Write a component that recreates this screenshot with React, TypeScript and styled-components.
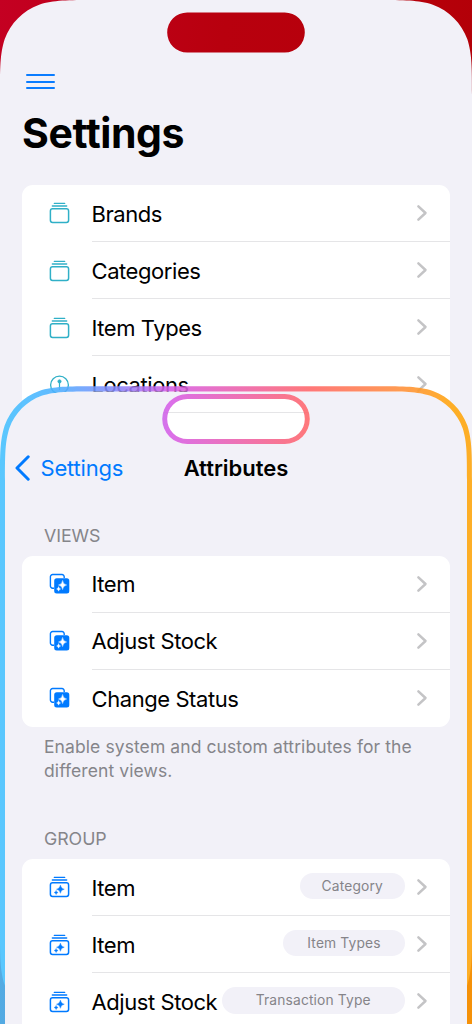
import React from "react";
import styled, { createGlobalStyle } from "styled-components";

const GlobalStyle = createGlobalStyle`
  * { box-sizing: border-box; }
  body { margin: 0; background: #b5000c; }
`;

const WIDTH = 472;
const HEIGHT = 1024;
const FRONT_TOP = 386;
const FRONT_HEIGHT = 1000;

/* Rounded rectangle with continuous-curvature corners. */
const squircle = (x: number, y: number, w: number, h: number, r: number) => {
  const a = 1.5287 * r;
  const b = 1.0885 * r;
  const c = 0.8684 * r;
  const d = 0.6315 * r;
  const e = 0.0749 * r;
  const f = 0.3728 * r;
  const g = 0.1691 * r;
  const R = x + w;
  const B = y + h;
  return [
    `M${x + a} ${y}`,
    `L${R - a} ${y}`,
    `C${R - b} ${y} ${R - c} ${y} ${R - d} ${y + e}`,
    `C${R - f} ${y + g} ${R - g} ${y + f} ${R - e} ${y + d}`,
    `C${R} ${y + c} ${R} ${y + b} ${R} ${y + a}`,
    `L${R} ${B - a}`,
    `C${R} ${B - b} ${R} ${B - c} ${R - e} ${B - d}`,
    `C${R - g} ${B - f} ${R - f} ${B - g} ${R - d} ${B - e}`,
    `C${R - c} ${B} ${R - b} ${B} ${R - a} ${B}`,
    `L${x + a} ${B}`,
    `C${x + b} ${B} ${x + c} ${B} ${x + d} ${B - e}`,
    `C${x + f} ${B - g} ${x + g} ${B - f} ${x + e} ${B - d}`,
    `C${x} ${B - c} ${x} ${B - b} ${x} ${B - a}`,
    `L${x} ${y + a}`,
    `C${x} ${y + b} ${x} ${y + c} ${x + e} ${y + d}`,
    `C${x + g} ${y + f} ${x + f} ${y + g} ${x + d} ${y + e}`,
    `C${x + c} ${y} ${x + b} ${y} ${x + a} ${y}Z`,
  ].join(" ");
};

const pill = (x: number, y: number, w: number, h: number) => {
  const r = h / 2;
  return `M${x + r} ${y} H${x + w - r} A${r} ${r} 0 0 1 ${x + w - r} ${y + h} H${x + r} A${r} ${r} 0 0 1 ${x + r} ${y}Z`;
};

const backClip = `${squircle(0, 0, WIDTH, HEIGHT, 62)} ${pill(167.2, 12.5, 137.6, 40)}`;
const innerScreen = squircle(5, 5.5, WIDTH - 10, FRONT_HEIGHT, 58);
const frontClip = `${innerScreen} ${pill(162.2, 8, 147.6, 50)}`;
const frameClip = `${squircle(0, 0.3, WIDTH, FRONT_HEIGHT + 10, 62)} ${innerScreen} ${pill(162.2, 8, 147.6, 50)} ${pill(167.2, 13, 137.6, 40)}`;

const Stage = styled.main`
  position: relative;
  width: 472px;
  height: 1024px;
  overflow: hidden;
  background: linear-gradient(100deg, #c40022 0%, #b8000e 35%, #b6000a 65%, #a90002 100%);
  font-family: Inter, "Liberation Sans", sans-serif;
  color: #000;
`;

const BackScreen = styled.section`
  height: 1024px;
  padding: 73px 22px 0;
  background: #f2f1f8;
  clip-path: path(evenodd, "${backClip}");
`;

const MenuButton = styled.button`
  display: flex;
  flex-direction: column;
  gap: 4.5px;
  width: 29px;
  margin: 0 0 0 4px;
  padding: 1px 0 0;
  border: 0;
  background: none;
`;

const MenuLine = styled.span`
  width: 29px;
  height: 2px;
  border-radius: 1px;
  background: #0a7cff;
`;

const LargeTitle = styled.h1`
  margin: 18px 0 0;
  height: 52px;
  font-size: 41px;
  line-height: 52px;
  font-weight: 700;
  letter-spacing: -0.4px;
`;

const Card = styled.ul`
  margin: 0;
  padding: 0;
  list-style: none;
  border-radius: 11px;
  background: #fff;
  overflow: hidden;
`;

const BackCard = styled(Card)`
  margin-top: 25.9px;
`;

const RowItem = styled.li`
  display: flex;
  align-items: stretch;
  height: 57.15px;
  padding-left: 27px;
`;

const IconSlot = styled.span`
  display: flex;
  align-items: center;
  width: 42.5px;
  flex: none;
`;

const RowBody = styled.div<{ $last?: boolean }>`
  display: flex;
  align-items: center;
  flex: 1;
  min-width: 0;
  padding-right: 22px;
  border-bottom: ${(p) => (p.$last ? "0" : "1px solid #e5e5e7")};
`;

const RowLabel = styled.span`
  flex: 1;
  white-space: nowrap;
  font-size: 22px;
  line-height: 28px;
  letter-spacing: -0.43px;
  padding-top: 1.4px;
`;

const Tag = styled.span<{ $width: number }>`
  display: flex;
  align-items: center;
  justify-content: center;
  flex: none;
  width: ${(p) => p.$width}px;
  height: 26.5px;
  margin: 0 11px 2px 0;
  border-radius: 14px;
  background: #f2f1f8;
  color: #858489;
  font-size: 13.8px;
  letter-spacing: 0.15px;
  white-space: nowrap;
`;

const Front = styled.section`
  position: absolute;
  top: ${FRONT_TOP}px;
  left: 0;
  width: 472px;
  height: 1010px;
`;

const Frame = styled.div`
  position: absolute;
  inset: 0;
  opacity: 0.88;
  background: linear-gradient(90deg, #45c2ff 0%, #4cb0ff 12%, #8a86fa 25%, #d65ce6 36%, #f0609c 54%, #ff6666 66%, #ff8c3c 84%, #ffa50a 96%);
  clip-path: path(evenodd, "${frameClip}");
`;

const FrontScreen = styled.div`
  height: 1010px;
  padding: 62px 22px 0;
  background: #f2f1f8;
  clip-path: path(evenodd, "${frontClip}");
`;

const NavBar = styled.header`
  display: grid;
  grid-template-columns: 1fr auto 1fr;
  align-items: center;
  height: 40px;
`;

const BackLink = styled.a`
  display: flex;
  align-items: center;
  gap: 10px;
  margin-left: -7.5px;
  color: #007aff;
  font-size: 22px;
  letter-spacing: -0.2px;
`;

const NavTitle = styled.h2`
  margin: 0;
  font-size: 22px;
  font-weight: 600;
  letter-spacing: -0.02px;
`;

const GroupHeader = styled.h3<{ $top: number }>`
  margin: ${(p) => p.$top}px 0 7.5px 22px;
  height: 24px;
  color: #85858a;
  font-size: 17.8px;
  line-height: 24px;
  font-weight: 400;
  letter-spacing: -0.05px;
`;

const GroupNote = styled.p`
  margin: 8px 0 0 22px;
  color: #85858a;
  font-size: 17.5px;
  line-height: 24px;
  letter-spacing: 0.09px;
  white-space: nowrap;
`;

const StackIcon = ({ color, sparkle }: { color: string; sparkle?: boolean }) => (
  <svg width="21" height="22" viewBox="0 0 21 22" fill="none">
    <path d="M5.2 1.3H15.8" stroke={color} strokeWidth="1.2" strokeLinecap="round" />
    <path d="M3.4 3.9H17.6" stroke={color} strokeWidth="1.5" strokeLinecap="round" />
    <rect x="1.4" y="6.7" width="18.2" height="13.8" rx="2.2" stroke={color} strokeWidth="1.5" />
    {sparkle && (
      <>
        <path d="M11.4 9.1Q11.9 12.7 15.3 13.2Q11.9 13.7 11.4 17.3Q10.9 13.7 7.5 13.2Q10.9 12.7 11.4 9.1Z" fill={color} stroke={color} strokeWidth=".4" />
        <path d="M7.1 14.4Q7.4 16.2 9.1 16.5Q7.4 16.8 7.1 18.6Q6.8 16.8 5.1 16.5Q6.8 16.2 7.1 14.4Z" fill={color} stroke={color} strokeWidth=".4" />
      </>
    )}
  </svg>
);

const LocationIcon = () => (
  <svg width="21" height="22" viewBox="0 0 21 22" fill="none" stroke="#30b0c7">
    <circle cx="10.5" cy="11" r="8.9" strokeWidth="1.3" />
    <circle cx="10.5" cy="7.4" r="1.6" fill="#30b0c7" strokeWidth=".8" />
    <path d="M10.5 8V16" strokeWidth="1.2" />
  </svg>
);

const CopiesIcon = () => (
  <svg width="21" height="22" viewBox="0 0 21 22" fill="none">
    <path d="M5 15.2H3.6A2.2 2.2 0 0 1 1.4 13V3.7A2.2 2.2 0 0 1 3.6 1.5H13A2.2 2.2 0 0 1 15.2 3.7V5" stroke="#007aff" strokeWidth="1.4" />
    <rect x="5.2" y="5.3" width="15.1" height="15.1" rx="2.5" fill="#007aff" />
    <path d="M13.6 7.4Q14.1 11.4 17.7 12Q14.1 12.6 13.6 16.6Q13.1 12.6 9.5 12Q13.1 11.4 13.6 7.4Z" fill="#fff" stroke="#fff" strokeWidth=".4" />
    <path d="M9.6 13.6Q9.9 15.7 11.6 16Q9.9 16.3 9.6 18.2Q9.3 16.3 7.6 16Q9.3 15.7 9.6 13.6Z" fill="#fff" stroke="#fff" strokeWidth=".4" />
  </svg>
);

const Chevron = () => (
  <svg width="12" height="18" viewBox="0 0 12 18" fill="none">
    <path d="M2.4 2.3L9.5 9L2.4 15.7" stroke="#c4c4c6" strokeWidth="2.5" strokeLinecap="round" strokeLinejoin="round" />
  </svg>
);

const BackChevron = () => (
  <svg width="16" height="26" viewBox="0 0 16 26" fill="none">
    <path d="M13.2 1.8L2 13L13.2 24.2" stroke="#007aff" strokeWidth="3" strokeLinecap="round" strokeLinejoin="round" />
  </svg>
);

type RowProps = {
  icon: React.ReactNode;
  label: string;
  tag?: string;
  tagWidth?: number;
  last?: boolean;
};

const Row = ({ icon, label, tag, tagWidth = 100, last }: RowProps) => (
  <RowItem>
    <IconSlot>{icon}</IconSlot>
    <RowBody $last={last}>
      <RowLabel>{label}</RowLabel>
      {tag && <Tag $width={tagWidth}>{tag}</Tag>}
      <Chevron />
    </RowBody>
  </RowItem>
);

const teal = "#30b0c7";
const blue = "#007aff";

export default function App() {
  return (
    <>
      <GlobalStyle />
      <Stage>
        <BackScreen>
          <MenuButton aria-label="Menu">
            <MenuLine />
            <MenuLine />
            <MenuLine />
          </MenuButton>
          <LargeTitle>Settings</LargeTitle>
          <BackCard>
            <Row icon={<StackIcon color={teal} />} label="Brands" />
            <Row icon={<StackIcon color={teal} />} label="Categories" />
            <Row icon={<StackIcon color={teal} />} label="Item Types" />
            <Row icon={<LocationIcon />} label="Locations" />
            <RowItem />
          </BackCard>
        </BackScreen>
        <Front>
          <FrontScreen>
            <NavBar>
              <BackLink>
                <BackChevron />
                Settings
              </BackLink>
              <NavTitle>Attributes</NavTitle>
            </NavBar>
            <GroupHeader $top={36}>VIEWS</GroupHeader>
            <Card>
              <Row icon={<CopiesIcon />} label="Item" />
              <Row icon={<CopiesIcon />} label="Adjust Stock" />
              <Row icon={<CopiesIcon />} label="Change Status" last />
            </Card>
            <GroupNote>
              Enable system and custom attributes for the
              <br />
              different views.
            </GroupNote>
            <GroupHeader $top={44.5}>GROUP</GroupHeader>
            <Card>
              <Row icon={<StackIcon color={blue} sparkle />} label="Item" tag="Category" tagWidth={105.5} />
              <Row icon={<StackIcon color={blue} sparkle />} label="Item" tag="Item Types" tagWidth={122} />
              <Row icon={<StackIcon color={blue} sparkle />} label="Adjust Stock" tag="Transaction Type" tagWidth={183.5} />
              <RowItem />
            </Card>
          </FrontScreen>
          <Frame />
        </Front>
      </Stage>
    </>
  );
}
